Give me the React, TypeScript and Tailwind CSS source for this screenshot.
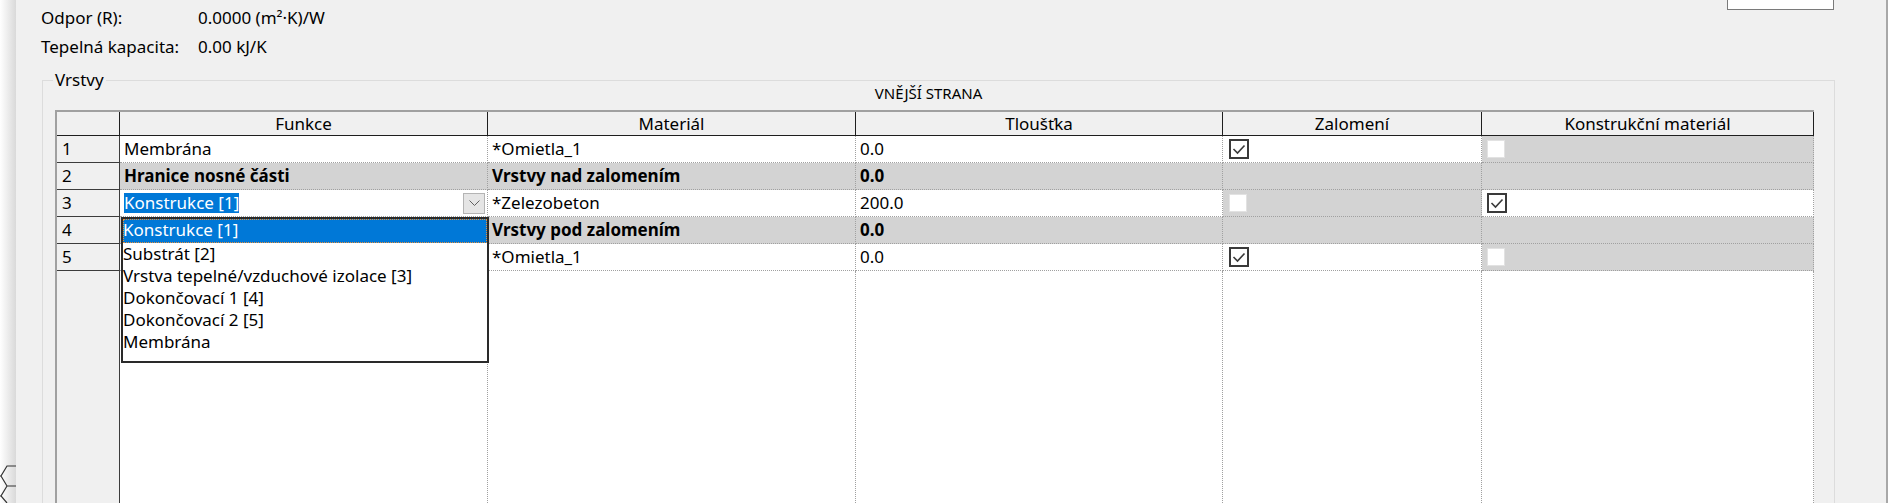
import React from 'react';

type Box = 'checked' | 'disabled' | null;

interface Row {
  n: string;
  f: string;
  m: string;
  t: string;
  z: Box;
  k: Box;
  group?: boolean;
  editing?: boolean;
}

// rows 4 and 5 have their Funkce cell hidden under the open list
const rows: Row[] = [
  { n: '1', f: 'Membrána', m: '*Omietla_1', t: '0.0', z: 'checked', k: 'disabled' },
  { n: '2', f: 'Hranice nosné části', m: 'Vrstvy nad zalomením', t: '0.0', z: null, k: null, group: true },
  { n: '3', f: 'Konstrukce [1]', m: '*Zelezobeton', t: '200.0', z: 'disabled', k: 'checked', editing: true },
  { n: '4', f: '', m: 'Vrstvy pod zalomením', t: '0.0', z: null, k: null, group: true },
  { n: '5', f: '', m: '*Omietla_1', t: '0.0', z: 'checked', k: 'disabled' },
];

const options = [
  'Konstrukce [1]',
  'Substrát [2]',
  'Vrstva tepelné/vzduchové izolace [3]',
  'Dokončovací 1 [4]',
  'Dokončovací 2 [5]',
  'Membrána',
];

const CheckBox: React.FC<{ kind: Box }> = ({ kind }) => {
  if (kind === 'checked') {
    return (
      <span className="w-[20px] h-[20px] border-2 border-[#3a3a3a] bg-white flex items-center justify-center">
        <svg width="14" height="14" viewBox="0 0 14 14">
          <polyline points="1.5,7 5.5,11 12.5,3.5" fill="none" stroke="#3a3a3a" strokeWidth="1.6" />
        </svg>
      </span>
    );
  }
  if (kind === 'disabled') {
    return <span className="w-[18px] h-[18px] bg-white border border-[#e2e2e2]" />;
  }
  return null;
};

const cellBase =
  'h-[27px] flex items-center leading-[20px] border-r border-b border-dotted border-[#a0a0a0] overflow-hidden whitespace-nowrap';

const TableRow: React.FC<{ row: Row }> = ({ row }) => {
  const gray = 'bg-[#d3d3d3]';
  const white = 'bg-white';
  const txt = row.group ? 'font-bold' : '';
  return (
    <>
      <div className="h-[27px] flex items-center leading-[20px] pl-[5px] bg-[#f0f0f0] border-r border-b border-[#3c3c3c]">{row.n}</div>
      {row.editing ? (
        <div className={`${cellBase} ${white} pl-[4px] pr-[2px] justify-between`}>
          <span className="bg-[#0078d7] text-white">{row.f}</span>
          <span className="w-[22px] h-[21px] bg-[#e5e5e5] border border-[#b4b4b4] flex items-center justify-center">
            <svg width="11" height="7" viewBox="0 0 11 7">
              <polyline points="0.5,0.5 5.5,5.5 10.5,0.5" fill="none" stroke="#606060" strokeWidth="1" />
            </svg>
          </span>
        </div>
      ) : (
        <div className={`${cellBase} ${row.group ? gray : white} pl-[4px] ${txt}`}>{row.f}</div>
      )}
      <div className={`${cellBase} ${row.group ? gray : white} pl-[4px] ${txt}`}>{row.m}</div>
      <div className={`${cellBase} ${row.group ? gray : white} pl-[4px] ${txt}`}>{row.t}</div>
      <div className={`${cellBase} ${row.z === 'checked' ? white : gray} pl-[6px]`}>
        <CheckBox kind={row.z} />
      </div>
      <div className={`${cellBase} ${row.k === 'checked' ? white : gray} pl-[5px]`}>
        <CheckBox kind={row.k} />
      </div>
    </>
  );
};

const headers = ['', 'Funkce', 'Materiál', 'Tloušťka', 'Zalomení', 'Konstrukční materiál'];

export default function App() {
  return (
    <div className="flex w-[1888px] h-[503px] overflow-hidden bg-[#f0f0f0] text-[17px] text-black font-['Noto_Sans',sans-serif]">
      <div className="w-[16px] shrink-0 flex flex-col justify-end bg-gradient-to-r from-white to-[#d9d9d9]">
        <svg width="16" height="40" viewBox="0 0 16 40">
          <path d="M16 3 H7 L1 13 L7 23 H16 M7 23 L1 33 L7 40 M1 13 H0 M1 33 H0" fill="none" stroke="#333" strokeWidth="1.2" />
        </svg>
      </div>
      <div className="flex-1 flex flex-col border-r-2 border-[#a8a8a8]">
        <div className="h-[80px] shrink-0 flex justify-between">
          <div className="pl-[25px] pt-[7px] flex flex-col gap-[7px]">
            <div className="flex h-[22px] items-center">
              <span className="w-[157px]">Odpor (R):</span>
              <span>0.0000 (m²·K)/W</span>
            </div>
            <div className="flex h-[22px] items-center">
              <span className="w-[157px]">Tepelná kapacita:</span>
              <span>0.00 kJ/K</span>
            </div>
          </div>
          <div className="w-[107px] h-[10px] mr-[52px] bg-white border border-t-0 border-[#7a7a7a]" />
        </div>
        <div className="relative ml-[26px] w-[1793px] flex-1 border border-[#dcdcdc]">
          <span className="absolute -top-[13px] left-[10px] px-[2px] bg-[#f0f0f0] leading-[24px]">Vrstvy</span>
          <div className="h-[29px] pt-[2px] text-center text-[15px] leading-[20px] pr-[20px]">VNĚJŠÍ STRANA</div>
          <div className="relative ml-[12px] w-[1759px] border-l-2 border-t-2 border-[#a0a0a0]">
            <div className="grid grid-cols-[63px_368px_368px_367px_259px_332px]">
              {headers.map((h, i) => (
                <div key={i} className="h-[24px] bg-[#f0f0f0] border-r border-b border-[#1e1e1e] text-center leading-[23px]">
                  {h}
                </div>
              ))}
              {rows.map((r) => (
                <TableRow key={r.n} row={r} />
              ))}
              <div className="h-[260px] bg-[#f0f0f0] border-r border-[#3c3c3c]" />
              <div className="h-[260px] bg-white border-r border-dotted border-[#a0a0a0]" />
              <div className="h-[260px] bg-white border-r border-dotted border-[#a0a0a0]" />
              <div className="h-[260px] bg-white border-r border-dotted border-[#a0a0a0]" />
              <div className="h-[260px] bg-white border-r border-dotted border-[#a0a0a0]" />
              <div className="h-[260px] bg-white border-r border-dotted border-[#a0a0a0]" />
            </div>
            <div className="absolute left-[64px] top-[105px] w-[368px] h-[146px] bg-white border-2 border-[#2a2a2a] flex flex-col">
              {options.map((o, i) => (
                <div
                  key={o}
                  className={
                    i === 0
                      ? 'h-[24px] leading-[22px] bg-[#0078d7] text-white outline-1 outline-dotted outline-[#e8903a] -outline-offset-1'
                      : 'h-[22px] leading-[22px]'
                  }
                >
                  {o}
                </div>
              ))}
            </div>
          </div>
        </div>
      </div>
    </div>
  );
}
